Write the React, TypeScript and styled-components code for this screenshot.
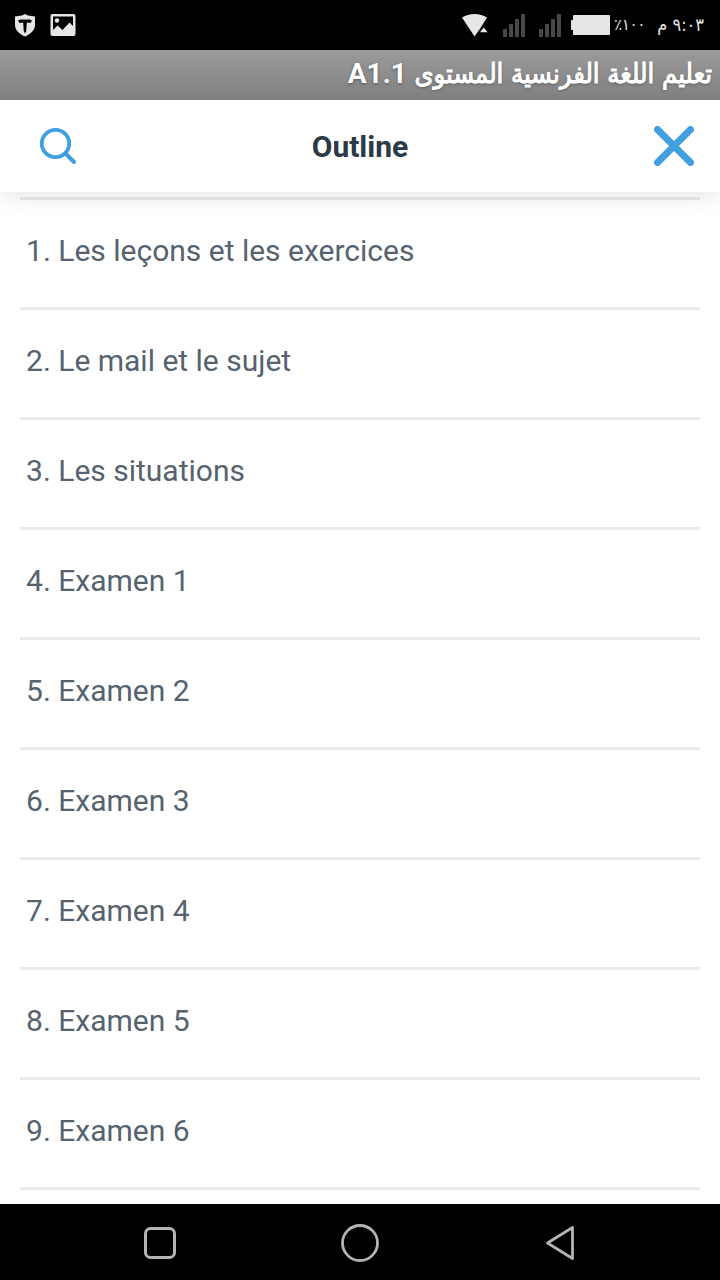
import React from "react";
import styled, { createGlobalStyle } from "styled-components";

const GlobalStyle = createGlobalStyle`
  *, *::before, *::after { box-sizing: border-box; }
  body {
    margin: 0;
    background: #ffffff;
    font-family: Roboto, "DejaVu Sans", sans-serif;
  }
`;

const Screen = styled.div`
  display: flex;
  flex-direction: column;
  min-height: 100vh;
`;

const StatusBar = styled.div`
  display: flex;
  align-items: center;
  justify-content: space-between;
  height: 50px;
  padding: 0 16px 0 14px;
  background: #000000;
  color: #e6e6e6;
`;

const StatusGroup = styled.div<{ $gap: number }>`
  display: flex;
  align-items: center;
  gap: ${(p) => p.$gap}px;
`;

const Icon = styled.svg`
  display: block;
  flex: none;
`;

const StatusText = styled.span<{ $size: number }>`
  font-family: "DejaVu Sans Condensed", "DejaVu Sans", sans-serif;
  font-size: ${(p) => p.$size}px;
  line-height: 24px;
  white-space: nowrap;
`;

const CourseBar = styled.div`
  height: 50px;
  padding: 0 8px;
  background: linear-gradient(#9b9b9b, #7f7f7f);
  color: #ffffff;
  font-family: "DejaVu Sans Condensed", "DejaVu Sans", sans-serif;
  font-size: 27px;
  line-height: 48px;
  white-space: nowrap;
  text-shadow: 0 1px 3px rgba(0, 0, 0, 0.4);
  -webkit-text-stroke: 1px #ffffff;
`;

const CourseLevel = styled.span`
  font-family: Roboto, sans-serif;
  font-size: 28px;
  font-weight: 700;
  -webkit-text-stroke: 0;
`;

const Header = styled.header`
  position: relative;
  display: grid;
  grid-template-columns: 1fr auto 1fr;
  align-items: center;
  height: 92px;
  padding: 0 10px 0 22px;
  background: #ffffff;
  box-shadow: 0 2px 26px rgba(0, 0, 0, 0.12);
  clip-path: inset(0 0 -40px 0);
`;

const HeaderTitle = styled.h1`
  margin: 0;
  padding: 2px 12px 0 0;
  color: #2b3a45;
  font-size: 30px;
  font-weight: 700;
  line-height: 36px;
`;

const IconButton = styled.button<{ $side: "start" | "end" }>`
  display: grid;
  place-items: center;
  justify-self: ${(p) => p.$side};
  width: 72px;
  height: 72px;
  padding: 0;
  border: 0;
  background: none;
  color: #3f9fdf;
  cursor: pointer;
`;

const OutlineList = styled.ol`
  flex: 1;
  margin: 0;
  padding: 5px 20px 14px;
  list-style: none;
`;

const OutlineItem = styled.li`
  border-top: 3px solid #ebebeb;

  &:last-child {
    border-bottom: 3px solid #ebebeb;
  }
`;

const OutlineLink = styled.a`
  display: block;
  padding: 33px 6px 38px;
  color: #56636e;
  font-size: 30px;
  line-height: 36px;
  text-decoration: none;
`;

const NavBar = styled.nav`
  display: grid;
  grid-template-columns: repeat(3, 200px);
  justify-content: center;
  height: 76px;
  background: #000000;
`;

const NavButton = styled.button`
  display: grid;
  place-items: center;
  padding: 2px 0 0;
  border: 0;
  background: none;
  color: #b4b4b4;
  cursor: pointer;
`;

const lessons = [
  "Les leçons et les exercices",
  "Le mail et le sujet",
  "Les situations",
  "Examen 1",
  "Examen 2",
  "Examen 3",
  "Examen 4",
  "Examen 5",
  "Examen 6",
];

function SignalIcon() {
  return (
    <Icon width="22" height="24" viewBox="0 0 22 24" fill="#484848" aria-hidden="true">
      <path d="M0 16h4v8H0zM6 11h4v13H6zM12 6h4v18h-4zM18 1h4v23h-4z" />
    </Icon>
  );
}

export default function App() {
  return (
    <Screen>
      <GlobalStyle />
      <StatusBar>
        <StatusGroup $gap={14}>
          <Icon width="22" height="24" viewBox="0 0 22 24" aria-hidden="true">
            <path
              d="M11 1 14 2.6 21 3.6V12c0 5-4 8.600-10 11.500C5 20.600 1 17 1 12V3.600L8 2.600Z"
              fill="#e6e6e6"
            />
            <path d="M4 7.500 6.500 6.500h9L18 7.500 16.500 10 12.800 9.500 12.300 18 11 20.500 9.700 18 9.200 9.500 5.500 10Z" fill="#000000" />
          </Icon>
          <Icon width="26" height="24" viewBox="0 0 26 24" aria-hidden="true">
            <rect x="0.500" y="1" width="25" height="22" rx="2" fill="#e6e6e6" />
            <path d="M3 3.500h20V13l-3.500-3.500-7 7.500L7.500 12.500 3 17Z" fill="#000000" />
            <circle cx="7" cy="7.500" r="2.200" fill="#e6e6e6" />
          </Icon>
        </StatusGroup>
        <StatusGroup $gap={10}>
          <StatusGroup $gap={14}>
            <Icon width="28" height="24" viewBox="0 0 28 24" fill="#e6e6e6" aria-hidden="true">
              <path d="M1 4.500C8-0.300 19-0.300 26 4.500L19.500 15 13.500 23.500Z" />
              <path d="m19.500 18.500 3.200-4 4 4.700h-7Z" />
            </Icon>
            <SignalIcon />
            <SignalIcon />
          </StatusGroup>
          <StatusGroup $gap={4}>
            <Icon width="39" height="20" viewBox="0 0 39 20" fill="#e6e6e6" aria-hidden="true">
              <rect x="2" width="37" height="20" rx="1" />
              <rect y="5" width="4" height="10" rx="1" />
            </Icon>
            <StatusGroup $gap={12}>
              <StatusText $size={16} dir="rtl">١٠٠٪</StatusText>
              <StatusText $size={18} dir="rtl">٩:٠٣ م</StatusText>
            </StatusGroup>
          </StatusGroup>
        </StatusGroup>
      </StatusBar>

      <CourseBar dir="rtl" lang="ar">
        تعليم اللغة الفرنسية المستوى <CourseLevel>A1.1</CourseLevel>
      </CourseBar>

      <Header>
        <IconButton $side="start" type="button" aria-label="Search">
          <Icon width="38" height="38" viewBox="0 0 38 38" fill="none" stroke="currentColor" aria-hidden="true">
            <circle cx="16.500" cy="16.500" r="13.700" strokeWidth="3.800" />
            <path d="m26.500 26.500 8.500 8.500" strokeWidth="4" strokeLinecap="round" />
          </Icon>
        </IconButton>
        <HeaderTitle>Outline</HeaderTitle>
        <IconButton $side="end" type="button" aria-label="Close">
          <Icon width="40" height="40" viewBox="0 0 40 40" fill="none" stroke="currentColor" aria-hidden="true">
            <path d="m3.500 3.500 33 33m0-33-33 33" strokeWidth="7" strokeLinecap="round" />
          </Icon>
        </IconButton>
      </Header>

      <OutlineList>
        {lessons.map((title, i) => (
          <OutlineItem key={title}>
            <OutlineLink href={`#lesson-${i + 1}`}>
              {i + 1}. {title}
            </OutlineLink>
          </OutlineItem>
        ))}
      </OutlineList>

      <NavBar>
        <NavButton type="button" aria-label="Recent apps">
          <Icon width="32" height="32" viewBox="0 0 32 32" fill="none" stroke="currentColor" strokeWidth="3" aria-hidden="true">
            <rect x="1.500" y="1.500" width="29" height="29" rx="5" />
          </Icon>
        </NavButton>
        <NavButton type="button" aria-label="Home">
          <Icon width="38" height="38" viewBox="0 0 38 38" fill="none" stroke="currentColor" strokeWidth="2.800" aria-hidden="true">
            <circle cx="19" cy="19" r="17.500" />
          </Icon>
        </NavButton>
        <NavButton type="button" aria-label="Back">
          <Icon width="30" height="36" viewBox="0 0 30 36" fill="none" stroke="currentColor" strokeWidth="2.800" strokeLinejoin="round" aria-hidden="true">
            <path d="M27.500 2.500v31L2.500 18Z" />
          </Icon>
        </NavButton>
      </NavBar>
    </Screen>
  );
}
